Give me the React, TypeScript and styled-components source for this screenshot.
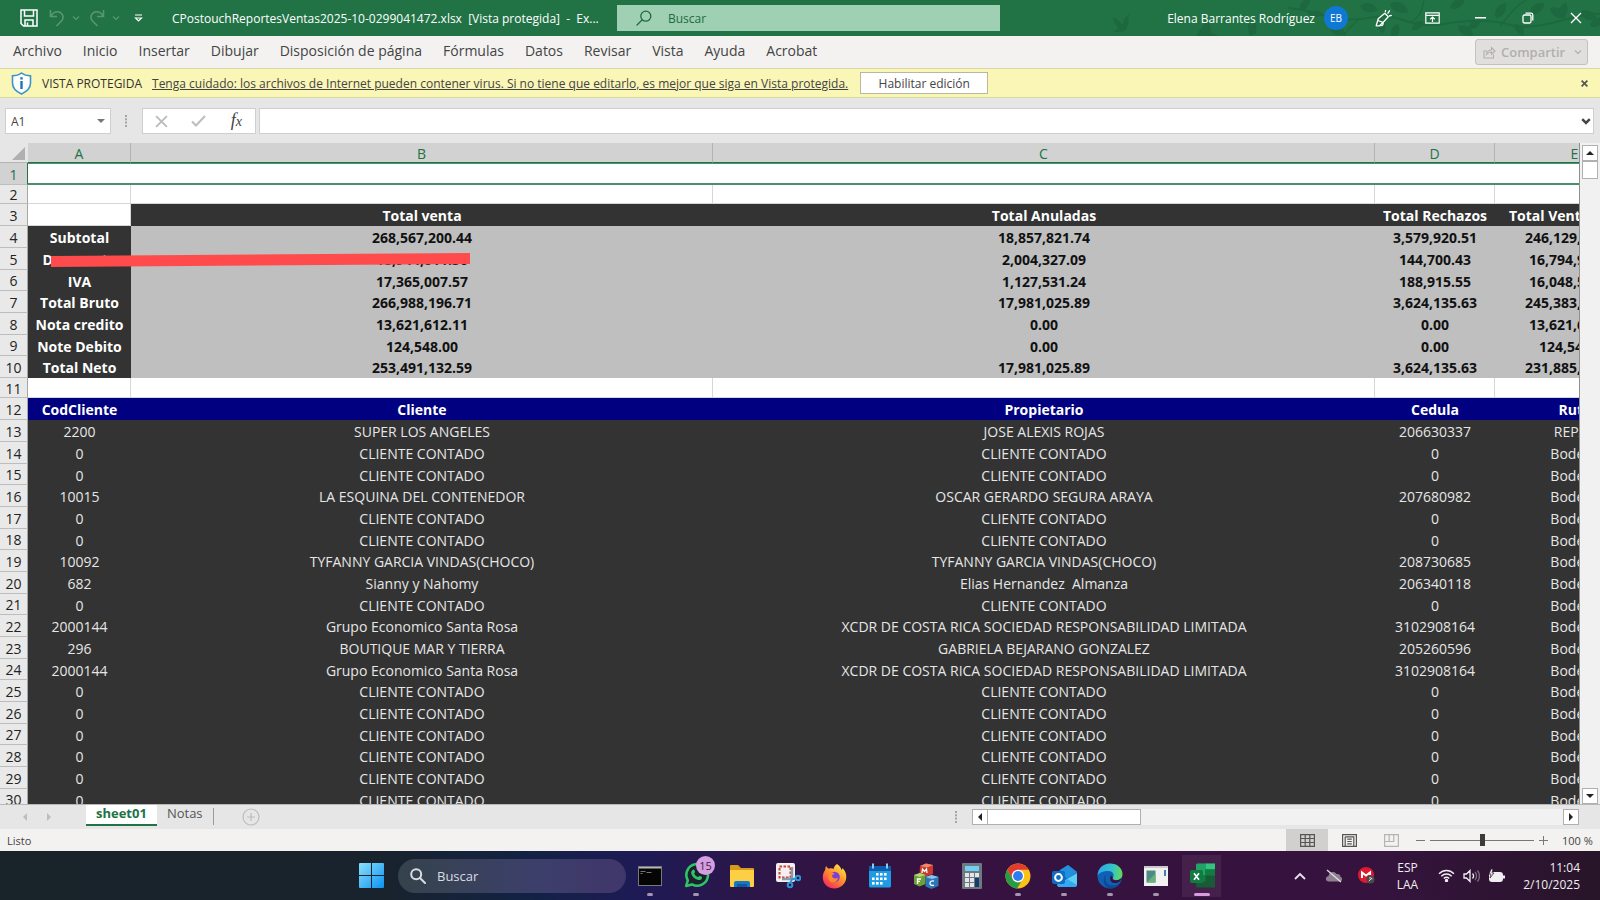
import React from 'react';
import styled, { createGlobalStyle, css } from 'styled-components';

const UI = '"Open Sans", "Noto Sans", sans-serif';
const SHEET = '"Open Sans", "Noto Sans", sans-serif';

const GlobalStyle = createGlobalStyle`
  * { box-sizing: border-box; }
  html, body { margin: 0; height: 100%; overflow: hidden; }
  body { font-family: ${UI}; font-size: 13px; color: #444; background: #e6e6e6; }
  button, input { font: inherit; color: inherit; margin: 0; }
  svg { display: block; flex: none; }
`;

const Screen = styled.div`
  display: flex;
  flex-direction: column;
  height: 100vh;
`;

const PlainButton = styled.button`
  display: flex;
  align-items: center;
  justify-content: center;
  padding: 0;
  border: 0;
  background: none;
`;

/* ---------- Title bar ---------- */

const TitleBar = styled.header`
  position: relative;
  display: flex;
  align-items: center;
  flex: none;
  height: 36px;
  background: #217346;
  color: #fff;
`;

const Foliage = styled.svg`
  position: absolute;
  right: 0;
  top: 0;
`;

const QuickAccess = styled.div`
  display: flex;
  align-items: center;
  width: 172px;
  padding-left: 20px;
`;

const QuickButton = styled(PlainButton)<{ $faded?: boolean; $w: number }>`
  width: ${p => p.$w}px;
  height: 24px;
  gap: 7px;
  opacity: ${p => (p.$faded ? 0.25 : 1)};
`;

const DocTitle = styled.h1`
  width: 445px;
  margin: 0;
  font-size: 12px;
  font-weight: 400;
  white-space: pre;
`;

const SearchBox = styled.label`
  display: flex;
  align-items: center;
  gap: 16px;
  flex: 0 1 383px;
  height: 26px;
  padding-left: 19px;
  background: #9fd0b3;
  color: #1e6b41;
`;

const BareInput = styled.input`
  flex: 1;
  min-width: 0;
  padding: 0;
  border: 0;
  outline: 0;
  background: none;
  &::placeholder { color: inherit; opacity: 1; }
`;

const SmallInput = styled(BareInput)`
  font-size: 12px;
`;

const Account = styled.div`
  position: relative;
  display: flex;
  align-items: center;
  gap: 9px;
  margin-left: auto;
  padding-right: 12px;
  font-size: 12px;
`;

const Avatar = styled.span`
  display: grid;
  place-items: center;
  width: 24px;
  height: 24px;
  border-radius: 50%;
  background: #0f78d4;
  font-size: 10px;
`;

const WindowButtons = styled.div`
  position: relative;
  display: flex;
`;

const WindowButton = styled(PlainButton)`
  width: 48px;
  height: 36px;
`;

/* ---------- Ribbon tabs ---------- */

const RibbonTabs = styled.nav`
  display: flex;
  align-items: center;
  gap: 21px;
  flex: none;
  height: 32px;
  padding: 0 12px 0 13px;
  background: #f3f2f1;
  font-size: 14px;
  line-height: 18px;
  a { padding-bottom: 2px; color: #444; text-decoration: none; }
`;

const ShareButton = styled.button`
  display: flex;
  align-items: center;
  gap: 5px;
  margin-left: auto;
  height: 26px;
  width: 113px;
  padding: 0 5px 0 7px;
  border: 1px solid #c4c2c0;
  border-radius: 3px;
  background: #e1dfdd;
  color: #b1afad;
  font-size: 13px;
  font-weight: 600;
  svg:last-child { margin-left: auto; }
`;

/* ---------- Protected view message ---------- */

const MessageBar = styled.section`
  display: flex;
  align-items: center;
  flex: none;
  height: 30px;
  padding: 0 11px;
  border-top: 1px solid #d9d6a8;
  border-bottom: 1px solid #d9d6a8;
  background: #faf6b5;
  font-size: 12px;
  strong { margin: 0 10px; font-weight: 400; color: #333; }
  a { color: #444; }
`;

const EnableButton = styled.button`
  width: 128px;
  height: 22px;
  margin-left: 12px;
  padding: 2px 0 0;
  border: 1px solid #b8b8a0;
  background: #fff;
  line-height: 18px;
`;

const CloseMessage = styled(PlainButton)`
  width: 10px;
  height: 20px;
  margin-left: auto;
`;

/* ---------- Formula bar ---------- */

const FormulaBar = styled.section`
  display: flex;
  flex: none;
  height: 45px;
  padding: 10px 6px 9px 5px;
  background: #e6e6e6;
`;

const fieldBox = css`
  display: flex;
  align-items: center;
  border: 1px solid #cfcfcf;
  background: #fff;
`;

const NameBox = styled.div`
  ${fieldBox}
  width: 106px;
  padding: 0 5px;
`;

const Grip = styled.div`
  display: flex;
  align-items: center;
  justify-content: center;
  width: 31px;
`;

const FormulaButtons = styled.div`
  ${fieldBox}
  width: 114px;
  margin-right: 3px;
`;

const FormulaButton = styled(PlainButton)`
  flex: 1;
  height: 22px;
`;

const FormulaInput = styled.div`
  ${fieldBox}
  flex: 1;
  padding: 0 2px;
`;

const Fx = styled.span`
  font: italic 18px/20px "Liberation Serif", serif;
  color: #444;
  small { font-size: 14px; }
`;

/* ---------- Worksheet ---------- */

const Workspace = styled.main`
  display: flex;
  flex: 1;
  min-height: 0;
`;

const GridView = styled.div`
  position: relative;
  flex: 1;
  min-width: 0;
  overflow: hidden;
  border-right: 1px solid #8f8f8f;
  background: #fff;
`;

const Sheet = styled.table`
  table-layout: fixed;
  width: 1655px;
  border-spacing: 0;
  font-family: ${SHEET};
  font-size: 14px;
  line-height: 16px;
  text-align: center;
  th, td { padding: 2px 0 0; overflow: hidden; white-space: pre; }
`;

const ColumnHead = styled.th`
  height: 20px;
  border-right: 1px solid #b3b3b3;
  border-bottom: 1px solid #217346;
  background: #d2d2d2;
  color: #217346;
  font-weight: 400;
`;

const Corner = styled.td`
  height: 20px;
  border-bottom: 1px solid #b3b3b3;
  background: #e6e6e6;
  svg { margin: 0 0 0 12px; }
`;

const RowHead = styled.th<{ $active: boolean }>`
  border-right: 1px solid ${p => (p.$active ? '#217346' : '#a6a6a6')};
  border-bottom: 1px solid #bdbdbd;
  background: ${p => (p.$active ? '#d2d2d2' : '#e9e9e9')};
  color: ${p => (p.$active ? '#217346' : '#222')};
  font-weight: 400;
`;

type Kind = 'selected' | 'blank' | 'dark' | 'total' | 'navy' | 'data';

const cellLook = {
  selected: css`
    border-top: 1px solid #4c9069;
    border-bottom: 2px solid #4c9069;
    background: #fff;
  `,
  blank: css`
    border-right: 1px solid #d6d6d6;
    border-bottom: 1px solid #d6d6d6;
    background: #fff;
  `,
  dark: css`
    background: #333;
    color: #fff;
    font-weight: 700;
  `,
  total: css`
    background: #bfbfbf;
    color: #111;
    font-weight: 700;
  `,
  navy: css`
    background: #000080;
    color: #fff;
    font-weight: 700;
  `,
  data: css`
    background: #333;
    color: #e6e6e6;
  `,
};

const Cell = styled.td<{ $kind: Kind }>`
  ${p => cellLook[p.$kind]}
`;

const Row = styled.tr<{ $h: number }>`
  height: ${p => p.$h}px;
`;

const Stroke = styled.svg`
  position: absolute;
  left: 51px;
  top: 110px;
`;

const VScroll = styled.div`
  display: flex;
  flex-direction: column;
  align-items: center;
  width: 20px;
  padding-top: 2px;
  background: #f1f1f1;
`;

const ScrollButton = styled(PlainButton)`
  width: 16px;
  height: 16px;
  border: 1px solid #b0b0b0;
  background: #fff;
`;

const VThumb = styled.div`
  width: 16px;
  height: 18px;
  margin-bottom: auto;
  border: 1px solid #b0b0b0;
  background: #fff;
`;

/* ---------- Sheet tabs ---------- */

const TabStrip = styled.section`
  display: flex;
  flex: none;
  height: 25px;
  border-top: 1px solid #b8b8b8;
  background: #e6e6e6;
  color: #555;
`;

const TabArrows = styled.div`
  display: flex;
  align-items: center;
  gap: 16px;
  width: 86px;
  padding-left: 21px;
`;

const SheetTab = styled.button<{ $active?: boolean }>`
  height: 21px;
  padding: 0 10px 3px;
  border: 0;
  border-bottom: 2px solid ${p => (p.$active ? '#217346' : 'transparent')};
  background: ${p => (p.$active ? '#fff' : 'none')};
  color: ${p => (p.$active ? '#217346' : '#555')};
  font-weight: ${p => (p.$active ? 700 : 400)};
  line-height: 16px;
`;

const TabDivider = styled.div`
  width: 1px;
  height: 17px;
  margin-top: 3px;
  background: #999;
`;

const AddSheet = styled(PlainButton)`
  width: 18px;
  margin-left: 28px;
`;

const HScroll = styled.div`
  display: flex;
  align-items: center;
  width: 662px;
  margin-left: auto;
  padding-right: 21px;
`;

const HGrip = styled.div`
  width: 17px;
`;

const HTrack = styled.div`
  display: flex;
  flex: 1;
  background: #f1f1f1;
`;

const HThumb = styled.div`
  width: 153px;
  height: 16px;
  border: 1px solid #b0b0b0;
  border-left: 0;
  background: #fff;
`;

/* ---------- Status bar ---------- */

const StatusBar = styled.footer`
  display: flex;
  align-items: center;
  flex: none;
  height: 22px;
  padding: 0 9px 0 7px;
  background: #f3f2f1;
  font-size: 11px;
`;

const Views = styled.div`
  display: flex;
  margin-left: auto;
`;

const ViewButton = styled(PlainButton)<{ $active?: boolean }>`
  width: 42px;
  height: 22px;
  background: ${p => (p.$active ? '#d2d0ce' : 'none')};
`;

const ZoomControl = styled.div`
  display: flex;
  align-items: center;
  gap: 5px;
  margin-left: 4px;
`;

const ZoomRange = styled.input`
  width: 104px;
  height: 14px;
  appearance: none;
  background: linear-gradient(#777, #777) center / 100% 1px no-repeat;
  &::-webkit-slider-thumb {
    appearance: none;
    width: 5px;
    height: 12px;
    background: #3b3b3b;
  }
`;

const ZoomValue = styled.output`
  margin-left: 9px;
  width: 29px;
  white-space: nowrap;
`;

/* ---------- Windows taskbar ---------- */

const Taskbar = styled.footer`
  display: flex;
  align-items: center;
  flex: none;
  height: 49px;
  padding: 0 20px 0 22%;
  background: linear-gradient(90deg, #18232a 0%, #18232d 24%, #132244 33%, #1e1a55 40%, #2c1648 47%, #35123f 56%, #36133f 85%, #281529 100%);
  color: #f0eef2;
`;

const StartButton = styled(PlainButton)`
  width: 38px;
  height: 40px;
`;

const TaskSearch = styled.label`
  display: flex;
  align-items: center;
  gap: 11px;
  width: 228px;
  height: 34px;
  margin: 0 1px 0 8px;
  padding-left: 12px;
  border-radius: 17px;
  background: linear-gradient(90deg, #35434c, #3c3f6a 60%, #40366b);
  color: #d9dce2;
`;

const TaskButton = styled(PlainButton)<{ $active?: boolean }>`
  position: relative;
  width: 46px;
  height: 42px;
  border-radius: 4px;
  background: ${p => (p.$active ? 'linear-gradient(90deg, transparent 3px, #44204a 3px, #44204a 42px, transparent 42px)' : 'none')};
`;

const RunMark = styled.span<{ $active?: boolean }>`
  position: absolute;
  bottom: 1px;
  left: 50%;
  width: ${p => (p.$active ? 16 : 6)}px;
  height: 3px;
  border-radius: 2px;
  background: ${p => (p.$active ? '#dd9bdf' : '#a595b0')};
  transform: translateX(-50%);
`;

const Badge = styled.span`
  position: absolute;
  top: 1px;
  right: 4px;
  display: grid;
  place-items: center;
  width: 19px;
  height: 19px;
  border-radius: 50%;
  background: #d59ee0;
  color: #3b2146;
  font-size: 11px;
`;

const Tray = styled.div`
  display: flex;
  align-items: center;
  margin-left: auto;
  font-size: 12px;
  line-height: 17px;
`;

const TrayButton = styled(PlainButton)<{ $w: number }>`
  width: ${p => p.$w}px;
  height: 40px;
  text-align: center;
`;

const Clock = styled.time`
  width: 68px;
  text-align: right;
`;

/* ---------- Small drawings ---------- */

const Chevron = ({ size = 8, width = 1.2 }: { size?: number; width?: number }) => (
  <svg width={size} height={size} viewBox="0 0 8 8" fill="none" stroke="currentColor" strokeWidth={width}>
    <path d="M1 2.5 4 5.5 7 2.5" />
  </svg>
);

const turns = { up: 0, right: 90, down: 180, left: 270 };

const Triangle = ({ dir, color = '#222' }: { dir: keyof typeof turns; color?: string }) => (
  <svg width="8" height="8" viewBox="0 0 8 8">
    <path d="M0 6 4 2 8 6Z" fill={color} transform={`rotate(${turns[dir]} 4 4)`} />
  </svg>
);

const Dots = () => (
  <svg width="3" height="12" viewBox="0 0 3 12" fill="#a5a5a5">
    <path d="M0 0h2v2H0zM0 3.3h2v2H0zM0 6.6h2v2H0zM0 10h2v2H0z" />
  </svg>
);

const Lens = ({ flip, size = 16, width = 1.4 }: { flip?: boolean; size?: number; width?: number }) => (
  <svg width={size} height={size} viewBox="0 0 16 16" fill="none" stroke="currentColor" strokeWidth={width} strokeLinecap="round">
    <g transform={flip ? 'matrix(-1 0 0 1 16 0)' : undefined}>
      <circle cx="6.2" cy="6.2" r="5" />
      <path d="m10 10 5 5" />
    </g>
  </svg>
);

const SaveIcon = () => (
  <svg width="18" height="18" viewBox="0 0 18 18" fill="none" stroke="#fff" strokeWidth="1.5">
    <path d="M1 1h16v16H3.5L1 14.5zM4.5 1v6h9V1M5 17v-6h8v6M7.5 13.5V17" />
  </svg>
);

const UndoIcon = ({ redo }: { redo?: boolean }) => (
  <svg width="16" height="18" viewBox="0 0 16 18" fill="none" stroke="#fff" strokeWidth="1.6">
    <path transform={redo ? 'matrix(-1 0 0 1 16 0)' : undefined} d="M1.5 1v6.500H8M1.800 7.200C4 3 8.500 1.500 12 4c3 2.500 2.500 6 0 8.500L7.500 17" />
  </svg>
);

const Leaf = ({ x, y, r, s = 1 }: { x: number; y: number; r: number; s?: number }) => (
  <path d="M0 0C4-7 12-8 18-2 12 4 5 5 0 0Z" transform={`translate(${x} ${y}) rotate(${r}) scale(${s})`} />
);

const leaves = [
  [190, 36, -60, 0.8], [196, 34, -120, 0.7], [262, 14, -170, 0.8], [270, 30, 20, 0.9], [240, 10, -40, 0.8],
  [300, 6, 20, 1], [318, 16, 80, 1], [330, 4, 30, 1.1], [338, 24, 120, 0.9], [390, 8, -20, 0.9],
  [398, 26, 40, 1], [420, 20, 150, 0.8], [436, 18, -50, 1], [455, 24, 60, 0.8], [470, 14, -30, 1],
  [490, 8, 40, 1], [502, 18, -70, 0.9], [520, 12, 30, 1], [530, 26, -20, 0.9], [352, 30, -30, 0.8],
];

const FoliageArt = () => (
  <Foliage width="540" height="36" viewBox="0 0 540 36" fill="#1d683e" aria-hidden="true">
    <path d="M53 17c8 4 7 7 10 7 1-5 3-8 6-10-1 7 0 12-3 16-3 3-8 2-13 2 4-2 5-4 4-6-2-2-4-5-4-9Z" />
    <path d="M136 36c5-8 9-11 10-20 5 7 4 12 5 17l8 3z" />
    <path d="M228 8c30 2 46 16 80 10 34-7 40 12 76 6 32-5 50-4 70 2 34 4 60-14 86-12" fill="none" stroke="#1d683e" strokeWidth="2" />
    <path d="M300 18c-8 8-14 12-16 18M440 26c10-10 12-18 26-26M350 22c10-4 12-12 14-22" fill="none" stroke="#1d683e" strokeWidth="1.5" />
    {leaves.map(([x, y, r, s]) => <Leaf key={`${x}-${y}`} x={x} y={y} r={r} s={s} />)}
  </Foliage>
);

const PenIcon = () => (
  <svg width="18" height="18" viewBox="0 0 18 18" fill="none" stroke="#fff" strokeWidth="1.300" strokeLinejoin="round">
    <path d="M1.200 16.800 3.200 9.800 9.800 4.200 13.300 7.800 8.200 13.200 4.500 16.800ZM2.800 11.500 8 13.300M5.500 16.500C8 17 8.500 15 8 13.300M10.300 3.200l.4-2.200M12.600 4.600l2.200-3.200M14 7l2.800-.7" />
  </svg>
);

const RibbonDisplayIcon = () => (
  <svg width="15" height="12" viewBox="0 0 15 12" fill="none" stroke="#fff" strokeWidth="1.2">
    <path d="M.8.8h13.400v10.400H.8zM.8 3.300h13.400M7.500 10V5.200M5.200 7.300l2.300-2.200 2.300 2.200" />
  </svg>
);

const RestoreIcon = () => (
  <svg width="12" height="12" viewBox="0 0 12 12" fill="none" stroke="#fff" strokeWidth="1.3">
    <rect x="1" y="3" width="8" height="8" rx="1.500" />
    <path d="M3.500 1.200H9A1.800 1.800 0 0 1 10.800 3v5.500" />
  </svg>
);

const CrossIcon = ({ size, width, color }: { size: number; width: number; color: string }) => (
  <svg width={size} height={size} viewBox="0 0 12 12" stroke={color} strokeWidth={width}>
    <path d="m1 1 10 10M11 1 1 11" />
  </svg>
);

const ShareIcon = () => (
  <svg width="13" height="13" viewBox="0 0 13 13" fill="none" stroke="currentColor" strokeWidth="1.1">
    <path d="M4 5H1v7h9.500V8.500M3.500 8.500C4 5.500 6 4 8.500 4V1.500L12 5 8.500 8.200V6C6.500 6 5 6.800 3.500 8.500Z" />
  </svg>
);

const ShieldIcon = () => (
  <svg width="21" height="23" viewBox="0 0 21 23">
    <path d="M10.500 1C8 3 5 3.800 1.500 3.800V11c0 5 3.500 8.500 9 11 5.500-2.500 9-6 9-11V3.800C16 3.800 13 3 10.500 1Z" fill="#fff" stroke="#3d94c9" strokeWidth="1.600" />
    <path d="M9.300 9h2.400v8H9.300zM9.300 5.300h2.400v2.300H9.300z" fill="#1d74b8" />
  </svg>
);

const CheckIcon = () => (
  <svg width="15" height="12" viewBox="0 0 15 12" fill="none" stroke="#bdbdbd" strokeWidth="2">
    <path d="m1 6.500 4 4L14 1" />
  </svg>
);

const ViewIcon = ({ kind }: { kind: 'normal' | 'layout' | 'breaks' }) => (
  <svg width="15" height="13" viewBox="0 0 15 13" fill="none" stroke={kind === 'breaks' ? '#b5b5b5' : '#555'} strokeWidth="1.2">
    <path d="M.6.6h13.800v11.800H.6z" />
    {kind === 'normal' && <path d="M.6 4.500h13.800M.6 8.500h13.800M5.200.6v11.800M9.800.6v11.800" />}
    {kind === 'layout' && <path d="M3.200 2.800h8.600v9.600M3.200 2.800v9.600M5.200 5.200h4.600M5.200 7.500h4.600M5.200 9.800h4.600" />}
    {kind === 'breaks' && <path d="M5.200.6v6.900H.6M9.800.6v6.900H5.200" />}
  </svg>
);

const WindowsLogo = () => (
  <svg width="25" height="25" viewBox="0 0 25 25">
    <defs>
      <linearGradient id="win" x1="0" y1="0" x2="1" y2="1">
        <stop offset="0" stopColor="#8be0fb" />
        <stop offset="1" stopColor="#0a93f2" />
      </linearGradient>
    </defs>
    <path d="M0 1q0-1 1-1h11v12H0zM13 0h11q1 0 1 1v11H13zM0 13h12v12H1q-1 0-1-1zM13 13h12v11q0 1-1 1H13z" fill="url(#win)" />
  </svg>
);

const art: Record<string, React.ReactNode> = {
  terminal: (
    <svg width="24" height="20" viewBox="0 0 24 20">
      <rect x=".5" y=".5" width="23" height="19" fill="#050505" stroke="#77777c" />
      <path d="M1 1h22v1.500H1z" fill="#b9b9bd" />
      <path d="M2.500 5.500h5M2.500 7.500h2M8.500 6.500h5" stroke="#777" />
    </svg>
  ),
  whatsapp: (
    <svg width="27" height="27" viewBox="0 0 27 27">
      <path d="M3.200 24 4.800 18.300A10.800 10.800 0 1 1 9 22.400Z" fill="#19222d" stroke="#2fc266" strokeWidth="2.600" strokeLinejoin="round" />
      <path d="M9.500 8c1-.8 1.800-.4 2.200.8.5 1.200.5 1.600-.5 2.700.8 1.700 2 2.900 3.800 3.600 1-1.300 1.500-1.400 2.700-.8 1.500.7 1.600 1 1.100 2.200-.7 1.500-2.500 1.900-4.300 1.300-3.300-1-5.300-3-6.200-6C7.800 10.300 8.400 8.800 9.500 8Z" fill="#2fc266" />
    </svg>
  ),
  folder: (
    <svg width="26" height="24" viewBox="0 0 26 24">
      <path d="M1 2q0-1 1-1h7l3 3h12q1 0 1 1v5H1z" fill="#d99a1c" />
      <path d="M1 6h24v16q0 1-1 1H2q-1 0-1-1z" fill="#fccf45" />
      <path d="M5 23v-4q0-2 2-2h12q2 0 2 2v4z" fill="#1877c4" />
      <path d="M8 20h10v3H8z" fill="#0f5a9e" />
    </svg>
  ),
  snip: (
    <svg width="26" height="27" viewBox="0 0 26 27">
      <rect x="1" y="1" width="19" height="19" rx="2" fill="#f3eff2" />
      <rect x="4.500" y="4.500" width="11" height="11" fill="none" stroke="#c4452d" strokeWidth="2" strokeDasharray="2.500 1.500" />
      <path d="M17 5v13M7 17h10" stroke="#8b98a6" strokeWidth="2.500" />
      <g fill="none" stroke="#2c95d8" strokeWidth="2">
        <circle cx="15" cy="23" r="2.300" />
        <circle cx="23" cy="16" r="2.300" />
        <path d="m15.500 20.500 2-4M20.700 16.500l-4 1" />
      </g>
    </svg>
  ),
  firefox: (
    <svg width="25" height="26" viewBox="0 0 25 26">
      <defs>
        <linearGradient id="fox" x1=".9" y1="0" x2=".2" y2="1">
          <stop offset="0" stopColor="#fff14a" />
          <stop offset=".45" stopColor="#ff9a2a" />
          <stop offset="1" stopColor="#f5225f" />
        </linearGradient>
      </defs>
      <path d="M15 1c3 2 4 4 4.500 6 .8-.5 1-1.200 1-2C23.500 8 25 12 24 16.500 22.500 22 18 25.500 12.500 25.500 6 25.500.8 21 .8 14.500.8 11 2 8.500 3.200 7c0-1.500.3-3 1-4 .7 1.500 1.500 2.300 2.800 2.700C9 5 10.500 5.300 11.500 6 12 4 13 2 15 1Z" fill="url(#fox)" />
      <circle cx="12.500" cy="14" r="5.300" fill="#7a3fe0" />
      <path d="M7 10.500c2-1.500 4.500-1 5.500.5-1.500.5-2.500 1-2.500 2 1 3 4 3 6 1.500-.5 4-3.500 5.500-6 4.800C7 18.500 5.500 14.500 7 10.500Z" fill="#ff8a2a" />
    </svg>
  ),
  calendar: (
    <svg width="24" height="25" viewBox="0 0 24 25">
      <path d="M1 3h22v20q0 1.500-1.500 1.500h-19Q1 24.500 1 23z" fill="#1f9be6" />
      <path d="M1 3h22v5H1z" fill="#0d5fae" />
      <path d="M5 .5v5M19 .5v5" stroke="#7fd3fa" strokeWidth="2" />
      <g fill="#fff">
        {[[9, 10], [13, 10], [17, 10], [5, 14.500], [9, 14.500], [13, 14.500], [17, 14.500], [5, 19], [9, 19], [13, 19]].map(([x, y]) => (
          <rect key={`${x}-${y}`} x={x - 1} y={y} width="2.600" height="2.600" />
        ))}
      </g>
    </svg>
  ),
  cubes: (
    <svg width="26" height="26" viewBox="0 0 26 26">
      <path d="m7 3 6-2.500 7 1.500v9l-7 2.500L6.500 11z" fill="#c93a2c" />
      <path d="m7 3 6-2.500 7 1.500-6 2.500z" fill="#ee8a72" />
      <path d="m1 12 6-2 5.500 2v9L6.500 23.500 1 21z" fill="#6da136" />
      <path d="m1 12 6-2 5.500 2-6 2z" fill="#b5d676" />
      <path d="m12.500 14 6-2 7 2v9l-7 3-6-2.500z" fill="#2c77b8" />
      <path d="m12.500 14 6-2 7 2-6.500 2z" fill="#8cc4ea" />
      <path d="m9 10 .5-4 2 2.500 2-2.500.5 4M8 16H4.500v5M4.500 18.300H7M21 18.200c-2.500-1-4 .3-4 2s1.500 2.800 4 2" fill="none" stroke="#fff" strokeWidth="1.300" />
    </svg>
  ),
  calculator: (
    <svg width="20" height="26" viewBox="0 0 20 26">
      <rect width="20" height="26" rx="1" fill="#6f7780" />
      <path d="M3 3h14v5H3z" fill="#6fd0f3" />
      <g fill="#e3e6e9">
        {[10, 15, 20].map(y => [3, 8, 13].map(x => <rect key={`${x}-${y}`} x={x} y={y} width="4" height="4" />))}
      </g>
      <path d="M13 15h4v9h-4z" fill="#123d6e" />
    </svg>
  ),
  chrome: (
    <svg width="26" height="26" viewBox="0 0 26 26">
      <circle cx="13" cy="13" r="12.500" fill="#fbc116" />
      <path d="M2.200 6.700A12.500 12.500 0 0 1 23.800 6.700H13L7.600 16Z" fill="#e33b2e" />
      <path d="M2.200 6.700 7.600 16c2 3.500 5.400 4 8.500 3L12 25.500A12.500 12.500 0 0 1 2.200 6.700Z" fill="#279c48" />
      <circle cx="13" cy="13" r="6.200" fill="#fff" />
      <circle cx="13" cy="13" r="4.900" fill="#2f7cf0" />
    </svg>
  ),
  outlook: (
    <svg width="27" height="24" viewBox="0 0 27 24">
      <path d="M6 8 17 1l9 7v12q0 3-3 3H9q-3 0-3-3z" fill="#1267b4" />
      <path d="m9 6 8-5 9 7-10 7z" fill="#2191dd" />
      <path d="M6 21 26 9v11q0 3-3 3H9q-2 0-3-2Z" fill="#5ccdf5" />
      <path d="m16 15 10 6q-1 2-3 2H9q-2 0-3-2z" fill="#33aaf0" />
      <rect x="1" y="7" width="13" height="13" rx="2" fill="#0f6cc4" />
      <circle cx="7.500" cy="13.500" r="3.400" fill="none" stroke="#fff" strokeWidth="2" />
    </svg>
  ),
  edge: (
    <svg width="26" height="26" viewBox="0 0 26 26">
      <defs>
        <linearGradient id="edge" x1="0" y1=".3" x2="1" y2=".4">
          <stop offset="0" stopColor="#2aa6e8" />
          <stop offset=".6" stopColor="#35c3c8" />
          <stop offset="1" stopColor="#62da5b" />
        </linearGradient>
      </defs>
      <circle cx="12.800" cy="13" r="12.300" fill="#1260b5" />
      <path d="M.5 12.500C1 5.500 6 .6 13 .6c7.500 0 12.500 5 12.500 10.500 0 4-3 6-6 6-3.500 0-4.500-1.500-3.500-2.500 1.500-2 .5-6.500-4.500-6.500C6 8.100 1.800 10 .5 12.500Z" fill="url(#edge)" />
      <path d="M9.500 11c-3 4-.5 12.500 8 11.500 2.500-.3 4.500-1.500 6-3-2 4-6 6.300-10.500 6C6 25 4.500 15 9.500 11Z" fill="#0d4a94" />
      <path d="M16 14.500c-1 1-.4 3 3.500 2.700 2.600-.2 4.500-1.200 5.500-2.700-1 4-4.500 6-8 5.500-3.500-.6-5-4.500-3-7.500Z" fill="#36123e" />
    </svg>
  ),
  viewer: (
    <svg width="24" height="20" viewBox="0 0 24 20">
      <path d="M0 0h24v20H0z" fill="#f2f1f1" />
      <path d="M0 0h24v2H0z" fill="#c9c8cb" />
      <path d="M2.500 4.500h9v12h-9z" fill="#4d8a84" />
      <path d="m2.500 16.500 9-9v9z" fill="#6caf7a" />
      <path d="M20 4h2v6h-2z" fill="#4b7cb5" />
    </svg>
  ),
  excel: (
    <svg width="27" height="26" viewBox="0 0 27 26">
      <path d="M7 2q0-1.500 1.500-1.500H26v24H8.500Q7 24.500 7 23z" fill="#185c37" />
      <path d="M7 2q0-1.500 1.500-1.500h8v12H7z" fill="#21a366" />
      <path d="M16.500.5H26v6h-9.500z" fill="#33c481" />
      <path d="M16.500 6.500H26v6h-9.500zM7 12.500h9.500v6H7z" fill="#107c41" />
      <rect x="1" y="7" width="13" height="13" rx="1.500" fill="#107c41" />
      <path d="m5 10.300 5 6.400M10 10.300l-5 6.400" stroke="#fff" strokeWidth="1.700" />
    </svg>
  ),
};

const apps = [
  { id: 'terminal', name: 'Símbolo del sistema', running: true },
  { id: 'whatsapp', name: 'WhatsApp', running: true, badge: 15 },
  { id: 'folder', name: 'Explorador de archivos' },
  { id: 'snip', name: 'Recortes' },
  { id: 'firefox', name: 'Firefox' },
  { id: 'calendar', name: 'Calendario' },
  { id: 'cubes', name: 'MFC' },
  { id: 'calculator', name: 'Calculadora' },
  { id: 'chrome', name: 'Chrome', running: true },
  { id: 'outlook', name: 'Outlook', running: true },
  { id: 'edge', name: 'Edge', running: true },
  { id: 'viewer', name: 'Visor', running: true },
  { id: 'excel', name: 'Excel', running: true, active: true },
];

/* ---------- Data ---------- */

const ribbon = ['Archivo', 'Inicio', 'Insertar', 'Dibujar', 'Disposición de página', 'Fórmulas', 'Datos', 'Revisar', 'Vista', 'Ayuda', 'Acrobat'];

const columns = [
  { letter: 'A', width: 103 },
  { letter: 'B', width: 582 },
  { letter: 'C', width: 662 },
  { letter: 'D', width: 120 },
  { letter: 'E', width: 160 },
];

const empty = ['', '', '', '', ''];
const limited = 'XCDR DE COSTA RICA SOCIEDAD RESPONSABILIDAD LIMITADA';
const cash = ['0', 'CLIENTE CONTADO', 'CLIENTE CONTADO', '0', 'Bodega'];

const totals = [
  ['Subtotal', '268,567,200.44', '18,857,821.74', '3,579,920.51', '246,129,458.19'],
  ['Descuento', '18,944,011.30', '2,004,327.09', '144,700.43', '16,794,983.78'],
  ['IVA', '17,365,007.57', '1,127,531.24', '188,915.55', '16,048,560.78'],
  ['Total Bruto', '266,988,196.71', '17,981,025.89', '3,624,135.63', '245,383,035.19'],
  ['Nota credito', '13,621,612.11', '0.00', '0.00', '13,621,612.11'],
  ['Note Debito', '124,548.00', '0.00', '0.00', '124,548.00'],
  ['Total Neto', '253,491,132.59', '17,981,025.89', '3,624,135.63', '231,885,971.08'],
];

const clients = [
  ['2200', 'SUPER LOS ANGELES', 'JOSE ALEXIS ROJAS', '206630337', 'REPAR'],
  cash,
  cash,
  ['10015', 'LA ESQUINA DEL CONTENEDOR', 'OSCAR GERARDO SEGURA ARAYA', '207680982', 'Bodega'],
  cash,
  cash,
  ['10092', 'TYFANNY GARCIA VINDAS(CHOCO)', 'TYFANNY GARCIA VINDAS(CHOCO)', '208730685', 'Bodega'],
  ['682', 'Sianny y Nahomy', 'Elias Hernandez  Almanza', '206340118', 'Bodega'],
  cash,
  ['2000144', 'Grupo Economico Santa Rosa', limited, '3102908164', 'Bodega'],
  ['296', 'BOUTIQUE MAR Y TIERRA', 'GABRIELA BEJARANO GONZALEZ', '205260596', 'Bodega'],
  ['2000144', 'Grupo Economico Santa Rosa', limited, '3102908164', 'Bodega'],
  cash, cash, cash, cash, cash, cash,
];

const stepHeight = (i: number) => (i % 3 === 2 ? 21 : 22);

const rows: { kind: Kind; first?: Kind; height: number; cells: string[] }[] = [
  { kind: 'selected', height: 22, cells: empty },
  { kind: 'blank', height: 19, cells: empty },
  { kind: 'dark', first: 'blank', height: 22, cells: ['', 'Total venta', 'Total Anuladas', 'Total Rechazos', 'Total Ventas Netas'] },
  ...totals.map((cells, i) => ({ kind: 'total' as Kind, first: 'dark' as Kind, height: stepHeight(i), cells })),
  { kind: 'blank', height: 20, cells: empty },
  { kind: 'navy', height: 22, cells: ['CodCliente', 'Cliente', 'Propietario', 'Cedula', 'Ruta'] },
  ...clients.map((cells, i) => ({ kind: 'data' as Kind, height: stepHeight(i), cells })),
];

export default function App() {
  return (
    <Screen>
      <GlobalStyle />
      <TitleBar>
        <FoliageArt />
        <QuickAccess>
          <QuickButton $w={18} aria-label="Guardar"><SaveIcon /></QuickButton>
          <QuickButton $w={52} $faded aria-label="Deshacer"><UndoIcon /><Chevron /></QuickButton>
          <QuickButton $w={28} $faded aria-label="Rehacer"><UndoIcon redo /><Chevron /></QuickButton>
          <QuickButton $w={40} aria-label="Personalizar">
            <svg width="9" height="9" viewBox="0 0 9 9" fill="none" stroke="#fff" strokeWidth="1.200"><path d="M1 1h7M1.500 4h6L4.500 7z" /></svg>
          </QuickButton>
        </QuickAccess>
        <DocTitle>CPostouchReportesVentas2025-10-0299041472.xlsx  [Vista protegida]  -  Ex...</DocTitle>
        <SearchBox>
          <Lens flip size={16} width={1.300} />
          <SmallInput placeholder="Buscar" aria-label="Buscar" />
        </SearchBox>
        <Account>
          Elena Barrantes Rodríguez
          <Avatar>EB</Avatar>
        </Account>
        <WindowButtons>
          <WindowButton aria-label="Novedades"><PenIcon /></WindowButton>
          <WindowButton aria-label="Opciones de la cinta"><RibbonDisplayIcon /></WindowButton>
          <WindowButton aria-label="Minimizar">
            <svg width="11" height="2" viewBox="0 0 11 2"><path d="M0 0h11v1.500H0z" fill="#fff" /></svg>
          </WindowButton>
          <WindowButton aria-label="Restaurar"><RestoreIcon /></WindowButton>
          <WindowButton aria-label="Cerrar"><CrossIcon size={12} width={1.400} color="#fff" /></WindowButton>
        </WindowButtons>
      </TitleBar>

      <RibbonTabs>
        {ribbon.map(name => <a key={name} href="#cinta">{name}</a>)}
        <ShareButton><ShareIcon />Compartir<Chevron /></ShareButton>
      </RibbonTabs>

      <MessageBar>
        <ShieldIcon />
        <strong>VISTA PROTEGIDA</strong>
        <a href="#info">Tenga cuidado: los archivos de Internet pueden contener virus. Si no tiene que editarlo, es mejor que siga en Vista protegida.</a>
        <EnableButton>Habilitar edición</EnableButton>
        <CloseMessage aria-label="Cerrar mensaje"><CrossIcon size={7} width={3} color="#555" /></CloseMessage>
      </MessageBar>

      <FormulaBar>
        <NameBox>
          <SmallInput defaultValue="A1" aria-label="Cuadro de nombres" />
          <PlainButton aria-label="Nombres"><Triangle dir="down" color="#777" /></PlainButton>
        </NameBox>
        <Grip><Dots /></Grip>
        <FormulaButtons>
          <FormulaButton aria-label="Cancelar"><CrossIcon size={13} width={1.800} color="#bdbdbd" /></FormulaButton>
          <FormulaButton aria-label="Introducir"><CheckIcon /></FormulaButton>
          <FormulaButton aria-label="Insertar función"><Fx>f<small>x</small></Fx></FormulaButton>
        </FormulaButtons>
        <FormulaInput>
          <SmallInput aria-label="Barra de fórmulas" />
          <PlainButton aria-label="Expandir"><Chevron size={10} width={2} /></PlainButton>
        </FormulaInput>
      </FormulaBar>

      <Workspace>
        <GridView>
          <Sheet>
            <colgroup>
              <col width={28} />
              {columns.map(c => <col key={c.letter} width={c.width} />)}
            </colgroup>
            <thead>
              <tr>
                <Corner><svg width="13" height="13" viewBox="0 0 13 13"><path d="M13 0v13H0z" fill="#b0b0b0" /></svg></Corner>
                {columns.map(c => <ColumnHead key={c.letter} scope="col">{c.letter}</ColumnHead>)}
              </tr>
            </thead>
            <tbody>
              {rows.map((row, r) => (
                <Row key={r} $h={row.height}>
                  <RowHead scope="row" $active={r === 0}>{r + 1}</RowHead>
                  {row.cells.map((text, c) => (
                    <Cell key={c} $kind={c === 0 && row.first ? row.first : row.kind}>{text}</Cell>
                  ))}
                </Row>
              ))}
            </tbody>
          </Sheet>
          <Stroke width="420" height="15" viewBox="0 0 420 15" aria-hidden="true">
            <path d="M0 3 419 0v11L0 14z" fill="#ff4b4b" />
          </Stroke>
        </GridView>
        <VScroll>
          <ScrollButton aria-label="Subir"><Triangle dir="up" /></ScrollButton>
          <VThumb />
          <ScrollButton aria-label="Bajar"><Triangle dir="down" /></ScrollButton>
        </VScroll>
      </Workspace>

      <TabStrip>
        <TabArrows><Triangle dir="left" color="#bdbdbd" /><Triangle dir="right" color="#bdbdbd" /></TabArrows>
        <SheetTab $active>sheet01</SheetTab>
        <SheetTab>Notas</SheetTab>
        <TabDivider />
        <AddSheet aria-label="Hoja nueva">
          <svg width="18" height="18" viewBox="0 0 18 18" fill="none" stroke="#bdbdbd" strokeWidth="1.200">
            <circle cx="9" cy="9" r="8" /><path d="M9 5v8M5 9h8" />
          </svg>
        </AddSheet>
        <HScroll>
          <HGrip />
          <HGrip><Dots /></HGrip>
          <HTrack>
            <ScrollButton aria-label="Izquierda"><Triangle dir="left" /></ScrollButton>
            <HThumb />
          </HTrack>
          <ScrollButton aria-label="Derecha"><Triangle dir="right" /></ScrollButton>
        </HScroll>
      </TabStrip>

      <StatusBar>
        Listo
        <Views>
          <ViewButton $active aria-label="Normal"><ViewIcon kind="normal" /></ViewButton>
          <ViewButton aria-label="Diseño de página"><ViewIcon kind="layout" /></ViewButton>
          <ViewButton aria-label="Saltos de página"><ViewIcon kind="breaks" /></ViewButton>
        </Views>
        <ZoomControl>
          <svg width="9" height="9" viewBox="0 0 9 9"><path d="M0 4h9v1H0z" fill="#777" /></svg>
          <ZoomRange type="range" min="0" max="200" defaultValue="100" aria-label="Zoom" />
          <svg width="9" height="9" viewBox="0 0 9 9"><path d="M0 4h4V0h1v4h4v1H5v4H4V5H0z" fill="#777" /></svg>
          <ZoomValue>100 %</ZoomValue>
        </ZoomControl>
      </StatusBar>

      <Taskbar>
        <StartButton aria-label="Inicio"><WindowsLogo /></StartButton>
        <TaskSearch>
          <Lens size={16} width={2} />
          <BareInput placeholder="Buscar" aria-label="Buscar en el equipo" />
        </TaskSearch>
        {apps.map(app => (
          <TaskButton key={app.id} $active={app.active} aria-label={app.name}>
            {art[app.id]}
            {app.badge && <Badge>{app.badge}</Badge>}
            {app.running && <RunMark $active={app.active} />}
          </TaskButton>
        ))}
        <Tray>
          <TrayButton $w={34} aria-label="Iconos ocultos">
            <svg width="12" height="8" viewBox="0 0 12 8" fill="none" stroke="#e8e4ea" strokeWidth="1.800"><path d="M1 7l5-5 5 5" /></svg>
          </TrayButton>
          <TrayButton $w={33} aria-label="Nube">
            <svg width="18" height="14" viewBox="0 0 18 14">
              <path d="M4 12.500c-4 0-4-5-.5-5.500C4 3 9 1.500 11.500 5c3-.5 4 1.500 4 3 2.500.5 2 4.500-.5 4.500z" fill="#8d8191" />
              <path d="m2 1 14 12" stroke="#e0dbe2" strokeWidth="1.400" />
            </svg>
          </TrayButton>
          <TrayButton $w={33} aria-label="Antivirus">
            <svg width="17" height="17" viewBox="0 0 17 17">
              <circle cx="8" cy="8" r="8" fill="#dc1b2e" />
              <path d="M4 11V5.500l4 3 4-3V8" fill="none" stroke="#fff" strokeWidth="2" />
              <circle cx="12.500" cy="12.500" r="4" fill="#4a4a4a" />
              <path d="m10.800 14 3.400-3M11 11.300c1-1 3-.5 3 1" stroke="#ddd" fill="none" />
            </svg>
          </TrayButton>
          <TrayButton $w={49}>ESP<br />LAA</TrayButton>
          <TrayButton $w={29} aria-label="Wi-Fi">
            <svg width="17" height="13" viewBox="0 0 17 13" fill="none" stroke="#f0eef2" strokeWidth="1.400">
              <path d="M1 4.700c4.500-4.300 10.500-4.300 15 0M3.300 7.200c3-3 7.400-3 10.400 0M5.800 9.600c1.600-1.500 3.800-1.500 5.400 0" />
              <circle cx="8.500" cy="11.500" r="1" fill="#f0eef2" />
            </svg>
          </TrayButton>
          <TrayButton $w={20} aria-label="Volumen">
            <svg width="17" height="14" viewBox="0 0 17 14" fill="none" stroke="#f0eef2" strokeWidth="1.300">
              <path d="M1 5v4h2.500L7 12.500v-11L3.500 5zM9.500 4.500c1.300 1.500 1.300 3.500 0 5" />
              <path d="M12 3c2 2.500 2 5.500 0 8M14.500 1.500c2.500 3.500 2.500 7.500 0 11" stroke="#7b6a80" />
            </svg>
          </TrayButton>
          <TrayButton $w={31} aria-label="Batería">
            <svg width="17" height="14" viewBox="0 0 17 14">
              <rect x="2" y="4" width="12" height="8" rx="2" fill="#f0eef2" stroke="#f0eef2" strokeWidth="2" />
              <path d="M15 6.500h2v3h-2z" fill="#f0eef2" />
              <path d="M3 0 1 5h2l-1 4 4-5H4l1-4z" fill="#f0eef2" stroke="#2c152e" strokeWidth=".7" />
            </svg>
          </TrayButton>
          <Clock dateTime="2025-10-02T11:04">11:04<br />2/10/2025</Clock>
        </Tray>
      </Taskbar>
    </Screen>
  );
}
